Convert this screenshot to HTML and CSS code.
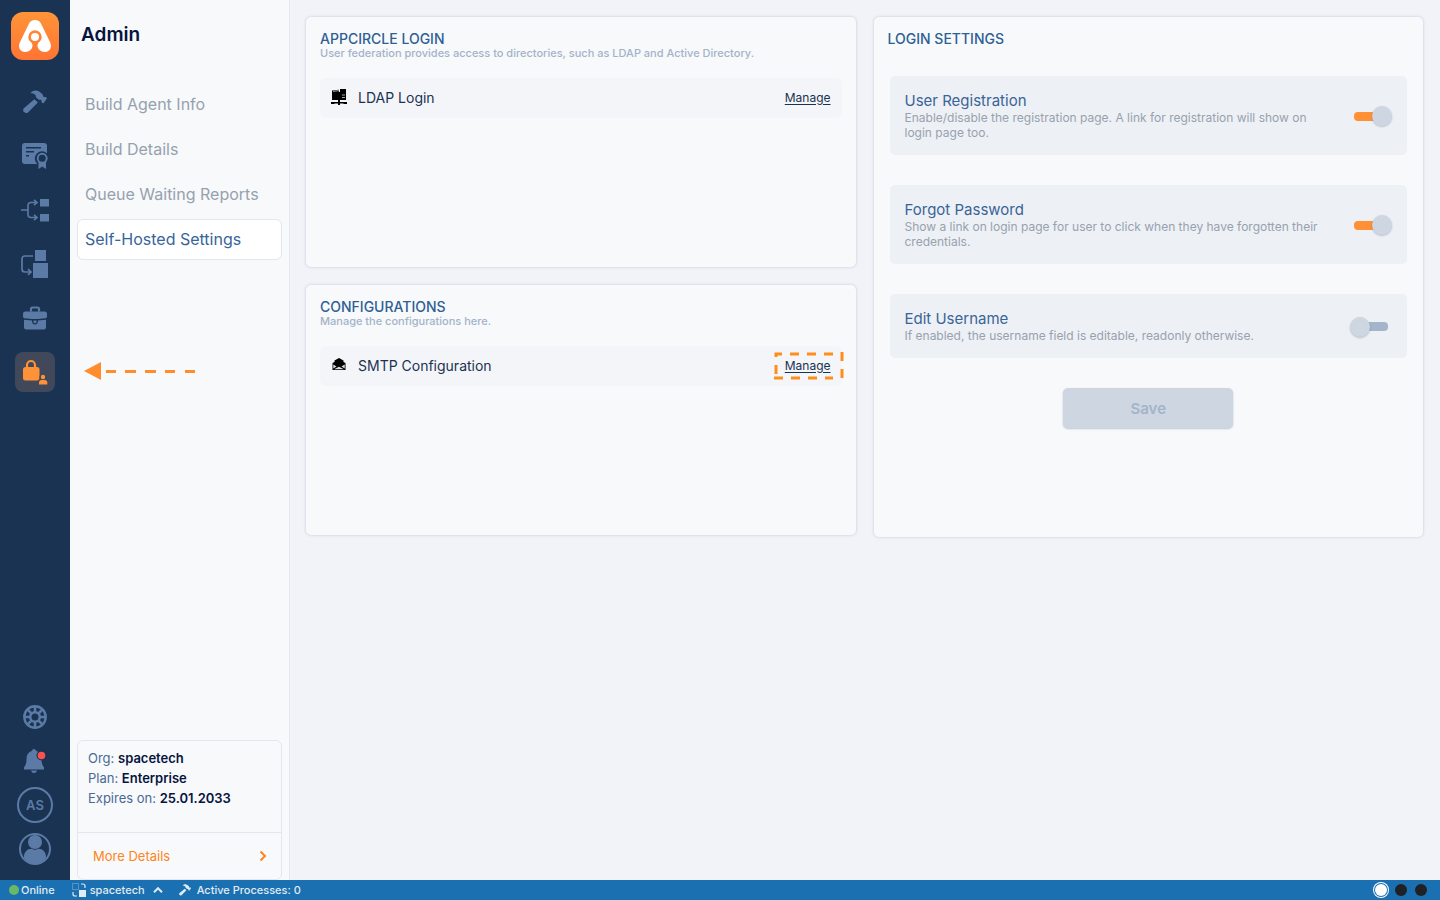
FILE: index.html
```html
<!DOCTYPE html>
<html lang="en">
<head>
    <meta charset="UTF-8">
    <meta name="viewport" content="width=device-width, initial-scale=1.0">
    <title>Admin - Self-Hosted Settings</title>
    <link rel="stylesheet" href="styles.css">
</head>
<body>
    <svg class="defs" aria-hidden="true">
        <symbol id="hammer" viewBox="0 0 24 24">
            <path d="M7.5 3C9.5.4 13.5-.3 16.500 1.800L19.500 4.200C20 4.800 19.800 5.800 20.300 6.600L21.500 7.300L22.500 6.700L24 8.300L20.300 13.600L18.400 11.900L18.700 10.700L17.600 9.800C16.500 10 15.600 9.600 14.900 8.900L13 7.200C13.200 5.200 11.500 3.300 7.500 3Z"/>
            <path d="M11.400 9.300L14.800 12.400L5 22.500C2.500 24.300-1 21.500.6 18.600Z"/>
        </symbol>
    </svg>
    <div class="app">
        <nav class="rail" aria-label="Main">
            <a href="#" class="logo" aria-label="Appcircle">
                <svg width="48" height="48" viewBox="0 0 48 48">
                    <defs>
                        <linearGradient id="logo-bg" x1="0" y1="0" x2="0" y2="1">
                            <stop offset="0" stop-color="#ff9438"/>
                            <stop offset="1" stop-color="#ff7434"/>
                        </linearGradient>
                    </defs>
                    <rect width="48" height="48" rx="12" fill="url(#logo-bg)"/>
                    <path d="M24 8C21 8 19 9.500 17.800 12L8.800 30.500C6.500 35.500 9.500 40 14 40C18.500 40 21.500 37 21.500 33.500C21.500 32 21 31.200 20.200 30.300C18.300 29 17.300 27.200 17.300 25A6.700 6.700 0 0 1 30.700 25C30.700 27.200 29.700 29 27.800 30.300C27 31.200 26.500 32 26.500 33.500C26.500 37 29.500 40 34 40C38.500 40 41.500 35.500 39.200 30.500L30.200 12C29 9.500 27 8 24 8Z" fill="#fff"/>
                    <circle cx="24" cy="25" r="4" fill="#fff"/>
                </svg>
            </a>
            <a href="#" class="rail-item" aria-label="Build">
                <svg width="24" height="24"><use href="#hammer"/></svg>
            </a>
            <a href="#" class="rail-item" aria-label="Signing identities">
                <svg width="28" height="28" viewBox="0 0 28 28">
                    <rect x="1" y="1" width="25" height="21" rx="3"/>
                    <path class="cut" d="M5 5.800H20M5 9.800H13M5 13.800H8" fill="none" stroke-width="1.600"/>
                    <circle class="cut-fill" cx="21" cy="16.500" r="7.200"/>
                    <path class="cut-fill" d="M16 19H26V27H16Z"/>
                    <path d="M17.500 20H25V27L21.200 24.600L17.500 27Z"/>
                    <circle class="line cut-bg" cx="21.200" cy="16.300" r="4.500" stroke-width="1.900"/>
                </svg>
            </a>
            <a href="#" class="rail-item" aria-label="Distribute">
                <svg width="28" height="28" viewBox="0 0 28 28">
                    <path class="line" d="M0 14H7M15 6.500H10Q7 6.500 7 9.500V18.500Q7 21.500 10 21.500H15M13 3.800L16 6.500L13 9.200M13 18.800L16 21.500L13 24.200" stroke-width="1.600"/>
                    <path d="M19 3H28.500V10.500H19ZM19 18H28.500V25.500H19Z"/>
                </svg>
            </a>
            <a href="#" class="rail-item" aria-label="Publish">
                <svg width="28" height="28" viewBox="0 0 28 28">
                    <path class="line" d="M12 6H4Q1 6 1 9V19Q1 22 4 22H9M7 19.200L10 22L7 24.800" stroke-width="1.700"/>
                    <path d="M14 0H25V11H14ZM12 13H27V28H12Z"/>
                </svg>
            </a>
            <a href="#" class="rail-item" aria-label="Store submit">
                <svg width="24" height="24" viewBox="0 0 24 24">
                    <path class="line" d="M8 5.500V3Q8 1.500 9.500 1.500H14.500Q16 1.500 16 3V5.500" stroke-width="2.200"/>
                    <path d="M2.500 5.500H21.500Q24 5.500 24 8V10.500Q24 12 22.500 12.300L15 13H9L1.500 12.300Q0 12 0 10.500V8Q0 5.500 2.500 5.500ZM1 13.800L9 14.500Q9 18.600 12 18.600T15 14.500L23 13.800V21Q23 23.500 20.500 23.500H3.500Q1 23.500 1 21Z"/>
                    <path d="M10.500 14.500H13.500V16Q13.500 17.200 12 17.200T10.500 16Z"/>
                </svg>
            </a>
            <a href="#" class="rail-item active" aria-label="Admin" aria-current="page">
                <svg width="26" height="26" viewBox="0 0 26 26">
                    <path class="line" d="M5 8V6A4 4 0 0 1 13 6V8" stroke-width="2.200"/>
                    <rect x="1" y="8" width="16.500" height="13.500" rx="2.500"/>
                    <circle class="cut-fill" cx="21" cy="18.500" r="3.600"/>
                    <path class="cut-fill" d="M16 26V22Q16.500 19.500 19 19.500L21 26Z"/>
                    <circle cx="21" cy="18" r="2.200"/>
                    <path d="M17 25.500V23.800Q17 21 19.500 21H22.500Q25.300 21 25.300 23.800V25.500Z"/>
                </svg>
                <svg class="pointer" width="112" height="18" viewBox="0 0 112 18">
                    <path d="M0 9L17 0V18Z"/>
                    <path class="line" d="M22 9.500H32M41 9.500H52M61 9.500H72M81 9.500H91M101 9.500H111" stroke-width="3"/>
                </svg>
            </a>
            <div class="rail-bottom">
                <a href="#" class="rail-small" aria-label="Support">
                    <svg width="24" height="24" viewBox="0 0 24 24">
                        <circle class="line" cx="12" cy="12" r="10.700" stroke-width="2.400"/>
                        <circle class="line" cx="12" cy="12" r="4.800" stroke-width="2.600"/>
                        <path class="line" d="M12 2V7M12 17V22M2 12H7M17 12H22M4.900 4.900L8.500 8.500M15.500 15.500L19.100 19.100M4.900 19.100L8.500 15.500M15.500 8.500L19.100 4.900" stroke-width="2.600"/>
                    </svg>
                </a>
                <a href="#" class="rail-small" aria-label="Notifications">
                    <svg width="24" height="24" viewBox="0 0 24 24">
                        <path d="M11 0Q12.800 0 13 1.800Q18.500 3.500 18.500 10Q18.500 16 21 18.500V20.500H1V18.500Q3.500 16 3.500 10Q3.500 3.500 9 1.800Q9.200 0 11 0ZM8 21.500H14Q13.500 24 11 24T8 21.500Z"/>
                        <circle class="cut-fill" cx="18.500" cy="6.500" r="5"/>
                        <circle class="unread" cx="18.500" cy="6.500" r="3.800"/>
                    </svg>
                </a>
                <a href="#" class="rail-small initials">AS</a>
                <a href="#" class="rail-small" aria-label="Profile">
                    <svg width="32" height="32" viewBox="0 0 32 32">
                        <circle class="line" cx="16" cy="16" r="15" stroke-width="2"/>
                        <circle cx="16" cy="9" r="7"/>
                        <path d="M5 25C4.500 19 8.500 15.700 12.500 15.700Q16 18 19.500 15.700C23.500 15.700 27.500 19 27 25Q22 31 16 31T5 25Z"/>
                    </svg>
                </a>
            </div>
        </nav>

        <aside class="side">
            <h1>Admin</h1>
            <nav class="menu" aria-label="Admin">
                <a href="#">Build Agent Info</a>
                <a href="#">Build Details</a>
                <a href="#">Queue Waiting Reports</a>
                <a href="#" class="selected">Self-Hosted Settings</a>
            </nav>
            <div class="org">
                <div class="org-info">
                    <p>Org: <b>spacetech</b></p>
                    <p>Plan: <b>Enterprise</b></p>
                    <p>Expires on: <b>25.01.2033</b></p>
                </div>
                <a href="#" class="more">
                    More Details
                    <svg width="8" height="12" viewBox="0 0 8 12"><path d="M1.500 1.500L6 6L1.500 10.500" fill="none" stroke="currentColor" stroke-width="2"/></svg>
                </a>
            </div>
        </aside>

        <main class="content">
            <div class="column">
                <section class="card">
                    <h2>APPCIRCLE LOGIN</h2>
                    <p class="hint">User federation provides access to directories, such as LDAP and Active Directory.</p>
                    <div class="row">
                        <svg width="16" height="16" viewBox="0 0 16 16">
                            <path d="M1 1.500L8 .8V11H1ZM9 0H15V11H1V3H9Z"/>
                            <path d="M0 13H16V15H12.500V14.500H9V16H7V14.500H3.500V15H0ZM7 11H9V13H7Z"/>
                            <path d="M2 2.300L8 1.700M11 6H14M11 8.500H14" stroke="#aaa" stroke-width="1"/>
                        </svg>
                        <span class="row-name">LDAP Login</span>
                        <a href="#" class="manage">Manage</a>
                    </div>
                </section>
                <section class="card">
                    <h2>CONFIGURATIONS</h2>
                    <p class="hint">Manage the configurations here.</p>
                    <div class="row">
                        <svg width="16" height="16" viewBox="0 0 16 16">
                            <path d="M8 1L12.500 3.500V5L14.500 6V13H1.500V6L3.500 5V3.500Z"/>
                            <path d="M2.300 7.500L5.500 9.500L2.300 11.500ZM13.700 7.500L10.500 9.500L13.700 11.500ZM3 12.300L8 9.800L13 12.300Z" fill="#ddd"/>
                        </svg>
                        <span class="row-name">SMTP Configuration</span>
                        <a href="#" class="manage">
                            Manage
                            <svg class="highlight" width="70" height="28" viewBox="0 0 70 28">
                                <path d="M2 5V2H8M16 2H25M33 2H42M50 2H59M68 0V9M68 17V26M59 26H51M43 26H34M26 26H17M9 26H0M2 22V13"/>
                            </svg>
                        </a>
                    </div>
                </section>
            </div>

            <section class="card settings">
                <h2>LOGIN SETTINGS</h2>
                <form>
                    <div class="setting">
                        <label for="registration">
                            <span class="setting-name">User Registration</span>
                            <span class="setting-text">Enable/disable the registration page. A link for registration will show on login page too.</span>
                        </label>
                        <input type="checkbox" class="toggle" id="registration" checked>
                    </div>
                    <div class="setting">
                        <label for="forgot">
                            <span class="setting-name">Forgot Password</span>
                            <span class="setting-text">Show a link on login page for user to click when they have forgotten their credentials.</span>
                        </label>
                        <input type="checkbox" class="toggle" id="forgot" checked>
                    </div>
                    <div class="setting">
                        <label for="username">
                            <span class="setting-name">Edit Username</span>
                            <span class="setting-text">If enabled, the username field is editable, readonly otherwise.</span>
                        </label>
                        <input type="checkbox" class="toggle" id="username">
                    </div>
                    <button type="submit" class="save" disabled>Save</button>
                </form>
            </section>
        </main>
    </div>

    <footer class="status">
        <span class="online">Online</span>
        <button type="button" class="org-switch">
            <svg width="14" height="14" viewBox="0 0 14 14">
                <path d="M.5.500H6.500V6.500H.5Z" fill="none" stroke="currentColor" stroke-opacity=".6" stroke-dasharray="1 1"/>
                <path d="M7 7H14V14H7Z"/>
                <path d="M9 1H11Q13 1 13 3V5M1 9V11Q1 13 3 13H5" fill="none" stroke="currentColor" stroke-width="1.200"/>
            </svg>
            spacetech
            <svg class="caret" width="10" height="6" viewBox="0 0 10 6"><path d="M1 5.200L5 1.200L9 5.200" fill="none" stroke="currentColor" stroke-width="2"/></svg>
        </button>
        <a href="#" class="processes">
            <svg width="12" height="12"><use href="#hammer"/></svg>
            Active Processes: 0
        </a>
        <div class="themes">
            <button type="button" class="theme light" aria-label="Light theme"></button>
            <button type="button" class="theme" aria-label="Dim theme"></button>
            <button type="button" class="theme" aria-label="Dark theme"></button>
        </div>
    </footer>
</body>
</html>
```
FILE: styles.css
```css
* {
    margin: 0;
    padding: 0;
    box-sizing: border-box;
}
body {
    display: flex;
    flex-direction: column;
    min-height: 100vh;
    background-color: #f2f3f8;
    color: #1a3352;
    font-family: Inter, sans-serif;
    font-size: 14px;
}
a {
    color: inherit;
    text-decoration: none;
}
button, input {
    font: inherit;
    border: none;
}
svg {
    display: block;
    flex-shrink: 0;
    fill: currentColor;
}
.defs {
    position: absolute;
    width: 0;
    height: 0;
}
.app {
    flex: 1;
    display: flex;
}

/* icon rail */
.rail {
    width: 70px;
    flex-shrink: 0;
    display: flex;
    flex-direction: column;
    align-items: center;
    gap: 14px;
    padding: 12px 0 13px;
    background-color: #1a3352;
    color: #5b7ba6;
}
.logo {
    margin-bottom: 8px;
}
.rail-item {
    position: relative;
    width: 40px;
    height: 40px;
    display: flex;
    align-items: center;
    justify-content: center;
    border-radius: 8px;
}
.rail-item.active {
    background-color: #40485a;
    color: #ff9238;
}
.line {
    fill: none;
    stroke: currentColor;
}
.cut {
    stroke: #1a3352;
}
.cut-fill, .cut-bg {
    fill: #1a3352;
}
.active .cut-fill {
    fill: #40485a;
}
.pointer {
    position: absolute;
    left: 69px;
    top: 10px;
    color: #ff8d2e;
}
.rail-bottom {
    margin-top: auto;
    display: flex;
    flex-direction: column;
    gap: 8px;
}
.rail-small {
    width: 36px;
    height: 36px;
    display: flex;
    align-items: center;
    justify-content: center;
}
.initials {
    border: 2px solid #5b7ba6;
    border-radius: 50%;
    font-size: 13px;
    font-weight: 600;
}
.unread {
    fill: #ff5050;
}

/* side panel */
.side {
    width: 220px;
    flex-shrink: 0;
    display: flex;
    flex-direction: column;
    padding: 23px 7px 0;
    background-color: #f8f9fb;
    border-right: 1px solid #e4e7ee;
}
.side h1 {
    padding-left: 4px;
    font-size: 19px;
    line-height: 24px;
    font-weight: 600;
    color: #061440;
}
.menu {
    display: flex;
    flex-direction: column;
    gap: 4px;
    margin-top: 37px;
}
.menu a {
    padding: 0 7px;
    border: 1px solid transparent;
    border-radius: 6px;
    font-size: 16px;
    line-height: 39px;
    color: #96a1ae;
}
.menu .selected {
    background-color: #fff;
    border-color: #e2e6ed;
    color: #37659a;
}
.org {
    margin-top: auto;
    border: 1px solid #e2e6ed;
    border-radius: 6px;
    font-size: 13px;
    line-height: 20px;
}
.org-info {
    padding: 7px 10px 24px;
    color: #4a6a94;
}
.org-info b {
    font-weight: 600;
    color: #061440;
}
.more {
    display: flex;
    justify-content: space-between;
    align-items: center;
    padding: 13px 14px 13px 15px;
    border-top: 1px solid #e2e6ed;
    color: #ff8420;
}

/* cards */
.content {
    flex: 1;
    display: grid;
    grid-template-columns: 1fr 1fr;
    align-items: start;
    gap: 18px;
    padding: 17px 17px 17px 16px;
}
.column {
    display: grid;
    gap: 18px;
}
.card {
    min-height: 250px;
    padding: 14px;
    background-color: #f8f9fb;
    border-radius: 5px;
    box-shadow: 0 0 3px rgba(80, 100, 150, 0.3);
}
.card h2 {
    font-size: 14px;
    line-height: 16px;
    font-weight: 500;
    color: #2f5f95;
}
.hint {
    font-size: 11px;
    line-height: 12px;
    font-weight: 500;
    color: #a3b3ca;
}
.row {
    display: flex;
    align-items: center;
    gap: 11px;
    height: 40px;
    margin-top: 19px;
    padding: 0 11px 2px;
    background-color: #f4f5f9;
    border-radius: 6px;
}
.row svg {
    color: #000;
}
.row-name {
    flex: 1;
}
.manage {
    position: relative;
    font-size: 12px;
    text-decoration: underline;
    text-underline-offset: 2px;
}
.manage .highlight {
    position: absolute;
    left: -11px;
    top: -6px;
    fill: none;
    stroke: #ff8d1c;
    stroke-width: 3;
}

/* login settings */
.settings {
    min-height: 520px;
}
.settings form {
    display: flex;
    flex-direction: column;
    gap: 30px;
    padding: 29px 2px 0;
}
.setting {
    display: flex;
    align-items: center;
    justify-content: space-between;
    gap: 24px;
    padding: 16px 15px 15px;
    background-color: #edf0f5;
    border-radius: 5px;
}
.setting-name {
    display: block;
    font-size: 15px;
    line-height: 18px;
    color: #3a6498;
}
.setting-text {
    display: block;
    font-size: 12px;
    line-height: 15px;
    color: #98a2ae;
}
.toggle {
    appearance: none;
    display: flex;
    align-items: center;
    flex-shrink: 0;
    width: 34px;
    height: 9px;
    margin-right: 4px;
    border-radius: 4px;
    background-color: #a3b5cb;
    cursor: pointer;
}
.toggle::before {
    content: "";
    width: 20px;
    height: 20px;
    flex-shrink: 0;
    margin-left: -4px;
    border-radius: 50%;
    background-color: #ced6e1;
    box-shadow: 0 1px 2px rgba(60, 80, 120, 0.3);
}
.toggle:checked {
    background-color: #ff9033;
}
.toggle:checked::before {
    margin-left: 18px;
}
.save {
    align-self: center;
    width: 170px;
    height: 40px;
    border-radius: 5px;
    background-color: #ced6e1;
    box-shadow: 0 1px 2px rgba(60, 80, 120, 0.3);
    color: #a3b4ca;
    font-size: 15px;
    font-weight: 600;
}

/* status bar */
.status {
    display: flex;
    align-items: center;
    height: 20px;
    padding: 0 13px 0 9px;
    background-color: #1a70b0;
    color: #e0ebf6;
    font-size: 11px;
    font-weight: 500;
}
.online::before {
    content: "";
    display: inline-block;
    width: 10px;
    height: 10px;
    margin-right: 2px;
    border-radius: 50%;
    background-color: #68b866;
    vertical-align: -1px;
}
.org-switch, .processes {
    display: flex;
    align-items: center;
    gap: 4px;
    margin-left: 17px;
    background: none;
    color: inherit;
}
.caret {
    margin-left: 4px;
}
.processes {
    gap: 6px;
    margin-left: 16px;
}
.themes {
    display: flex;
    gap: 8px;
    margin-left: auto;
}
.theme {
    width: 12px;
    height: 12px;
    border-radius: 50%;
    background-color: #202124;
}
.theme.light {
    background-color: #fff;
    box-shadow: 0 0 0 1px #1a70b0, 0 0 0 2px #fff;
}
```
